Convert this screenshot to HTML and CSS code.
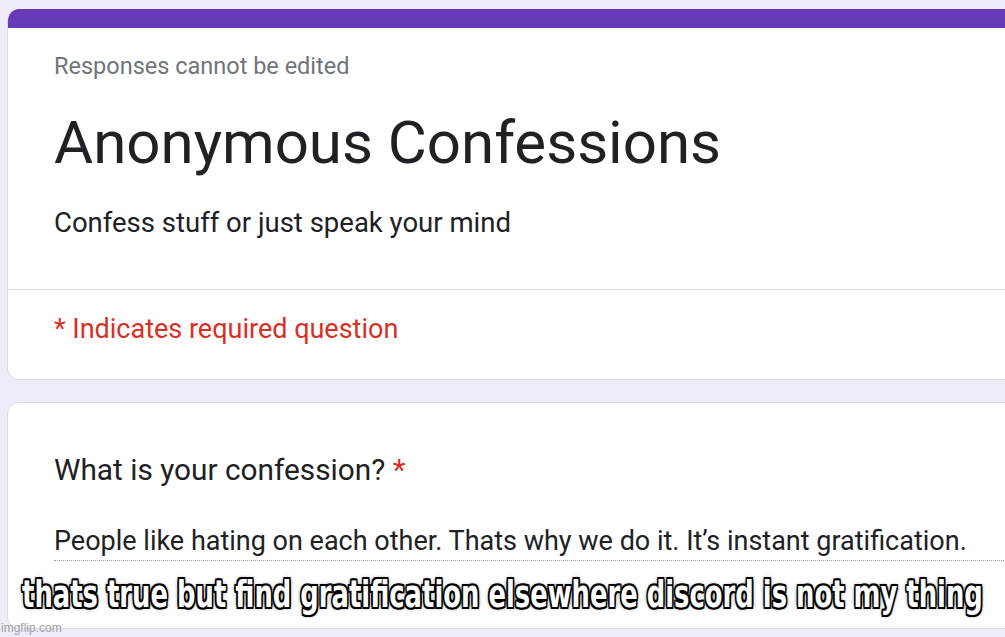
FILE: index.html
```html
<!DOCTYPE html>
<html lang="en">
<head>
    <meta charset="UTF-8">
    <meta name="viewport" content="width=device-width, initial-scale=1.0">
    <title>Anonymous Confessions</title>
    <link rel="stylesheet" href="styles.css">
</head>
<body>
    <main class="form">
        <section class="card header-card">
            <div class="band"></div>
            <div class="intro">
                <div class="notice">Responses cannot be edited</div>
                <h1>Anonymous Confessions</h1>
                <p class="description">Confess stuff or just speak your mind</p>
            </div>
            <div class="required-note">* Indicates required question</div>
        </section>
        <section class="card question-card">
            <h2>What is your confession? <span class="star">*</span></h2>
            <div class="answer">People like hating on each other. Thats why we do it. It’s instant gratification.</div>
        </section>
    </main>
    <div class="caption"><span>thats true but find gratification elsewhere discord is not my thing</span></div>
    <div class="watermark">imgflip.com</div>
</body>
</html>
```

FILE: styles.css
```css
html, body {
    margin: 0;
    padding: 0;
}
body {
    background-color: #f0ebf8;
    font-family: Roboto, Arial, sans-serif;
    height: 637px;
    overflow: hidden;
    position: relative;
}
.form {
    padding: 9px 0 0 7px;
}
.card {
    background-color: white;
    border: 1px solid #dadce0;
    border-radius: 12px;
    width: 1020px;
    box-sizing: border-box;
    overflow: hidden;
}
.header-card {
    height: 371px;
    border-top: none;
}
.band {
    background-color: #673ab7;
    height: 19px;
}
.intro {
    padding: 24px 0 50px 46px;
    border-bottom: 1px solid #dadce0;
}
.notice {
    font-size: 23.5px;
    line-height: 28px;
    color: #70757a;
}
h1 {
    margin: 25px 0 0;
    font-size: 60px;
    line-height: 76px;
    font-weight: 400;
    color: #202124;
}
.description {
    margin: 26px 0 0;
    font-size: 27.5px;
    line-height: 32px;
    color: #202124;
}
.required-note {
    padding: 23px 0 0 46px;
    font-size: 27px;
    line-height: 32px;
    color: #d93025;
}
.question-card {
    margin-top: 22px;
    height: 227px;
    padding: 49px 0 0 46px;
}
h2 {
    margin: 0;
    font-size: 29.8px;
    line-height: 36px;
    font-weight: 400;
    color: #202124;
}
.star {
    color: #d93025;
}
.answer {
    margin-top: 37px;
    padding-bottom: 3px;
    font-size: 27px;
    line-height: 32px;
    color: #202124;
    border-bottom: 1px dotted #9aa0a6;
}
.caption {
    position: absolute;
    left: 0;
    top: 573px;
    width: 1005px;
    display: flex;
    justify-content: center;
    white-space: nowrap;
}
.caption span {
    flex-shrink: 0;
    transform: scaleX(0.68);
    font-family: "DejaVu Sans", sans-serif;
    font-weight: 700;
    font-size: 38px;
    line-height: 42px;
    color: white;
    text-shadow: -2px -2px 0 #000, 2px -2px 0 #000, -2px 2px 0 #000, 2px 2px 0 #000,
        0 -2px 0 #000, 0 2px 0 #000, -2px 0 0 #000, 2px 0 0 #000, 0 0 5px #000;
}
.watermark {
    position: absolute;
    left: 1px;
    top: 621px;
    font-family: "Liberation Sans", Arial, sans-serif;
    font-size: 12px;
    color: #a0a0a0;
}
```
